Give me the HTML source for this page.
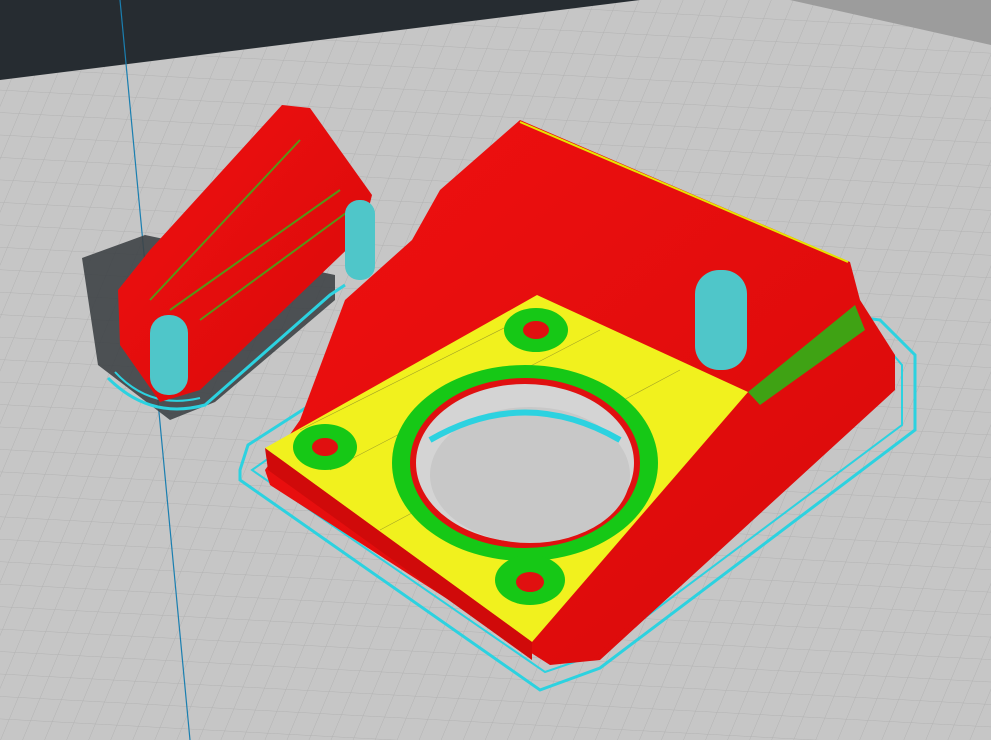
<!DOCTYPE html>
<html><head><meta charset="utf-8"><style>
html,body{margin:0;padding:0;width:991px;height:740px;overflow:hidden;background:#c3c3c3}
svg{display:block}
</style></head><body>
<svg width="991" height="740" viewBox="0 0 991 740" xmlns="http://www.w3.org/2000/svg">
<defs>
<pattern id="g" width="22" height="22" patternUnits="userSpaceOnUse" patternTransform="skewX(-20) rotate(3)">
<path d="M0 0H22M0 0V22" stroke="#b2b2b2" stroke-width="1" fill="none"/>
</pattern>
<linearGradient id="rd" x1="0" y1="0" x2="1" y2="1">
<stop offset="0" stop-color="#f01010"/><stop offset="1" stop-color="#d80a0a"/>
</linearGradient>
</defs>
<rect width="991" height="740" fill="#c6c6c6"/>
<rect width="991" height="740" fill="url(#g)"/>
<polygon points="0,0 640,0 0,80" fill="#262c31"/>
<polygon points="790,0 991,0 991,45" fill="#9c9c9c"/>
<line x1="120" y1="0" x2="190" y2="740" stroke="#1a7fb0" stroke-width="1.2"/>

<!-- small part shadow -->
<polygon points="82,258 145,235 335,275 335,300 215,402 170,420 98,365" fill="#3e4246" opacity="0.9"/>
<!-- small part cyan outline -->
<path d="M108,378 Q150,420 205,405 L330,295 L345,285" stroke="#2cd2e0" stroke-width="3" fill="none"/>
<path d="M115,372 Q150,410 200,398" stroke="#2cd2e0" stroke-width="2" fill="none"/>
<!-- small part -->
<polygon points="118,290 150,250 282,105 310,108 372,195 362,235 200,390 160,402 120,345" fill="url(#rd)"/>
<path d="M150,300 L300,140 M170,310 L340,190 M200,320 L350,210" stroke="#1bd01b" stroke-width="2" fill="none" opacity="0.7"/>
<rect x="150" y="315" width="38" height="80" rx="18" fill="#4fc6c9"/>
<rect x="345" y="200" width="30" height="80" rx="14" fill="#4fc6c9"/>

<!-- large part cyan outline -->
<path d="M240,470 L248,445 L520,270 L880,320 L915,355 L915,430 L600,668 L540,690 L240,480 Z" stroke="#2cd2e0" stroke-width="3" fill="none"/>
<path d="M252,470 L520,282 L872,330 L902,365 L902,425 L595,655 L545,672 Z" stroke="#2cd2e0" stroke-width="2" fill="none"/>
<!-- large part red body -->
<polygon points="265,470 300,420 345,300 412,240 440,190 520,120 850,262 860,300 895,355 895,390 600,660 550,665 270,485" fill="url(#rd)"/>
<line x1="520" y1="122" x2="848" y2="262" stroke="#e6e600" stroke-width="2"/>
<!-- yellow plate -->
<polygon points="265,448 537,295 748,392 532,642" fill="#f1f11e"/>
<path d="M300,430 L540,310 M330,470 L600,330 M380,530 L680,370" stroke="#333" stroke-width="0.6" opacity="0.4"/>
<!-- big ring -->
<ellipse cx="525" cy="463" rx="133" ry="98" fill="#16c816"/>
<ellipse cx="525" cy="463" rx="112" ry="82" fill="#d4d4d4" stroke="#e01010" stroke-width="6"/>
<ellipse cx="530" cy="475" rx="100" ry="68" fill="#c8c8c8"/>
<path d="M430,440 Q525,385 620,440" stroke="#2cd2e0" stroke-width="6" fill="none"/>
<!-- small holes -->
<ellipse cx="536" cy="330" rx="32" ry="22" fill="#16c816"/>
<ellipse cx="536" cy="330" rx="13" ry="9" fill="#e01010"/>
<ellipse cx="325" cy="447" rx="32" ry="23" fill="#16c816"/>
<ellipse cx="325" cy="447" rx="13" ry="9" fill="#e01010"/>
<ellipse cx="530" cy="580" rx="35" ry="25" fill="#16c816"/>
<ellipse cx="530" cy="582" rx="14" ry="10" fill="#e01010"/>
<!-- bottom edge red -->
<polygon points="265,448 532,642 532,660 268,470" fill="#d00a0a"/>
<!-- right slot -->
<rect x="695" y="270" width="52" height="100" rx="24" fill="#4fc6c9"/>
<polygon points="748,392 855,305 865,330 760,405" fill="#16c816" opacity="0.8"/>
</svg>
</body></html>
